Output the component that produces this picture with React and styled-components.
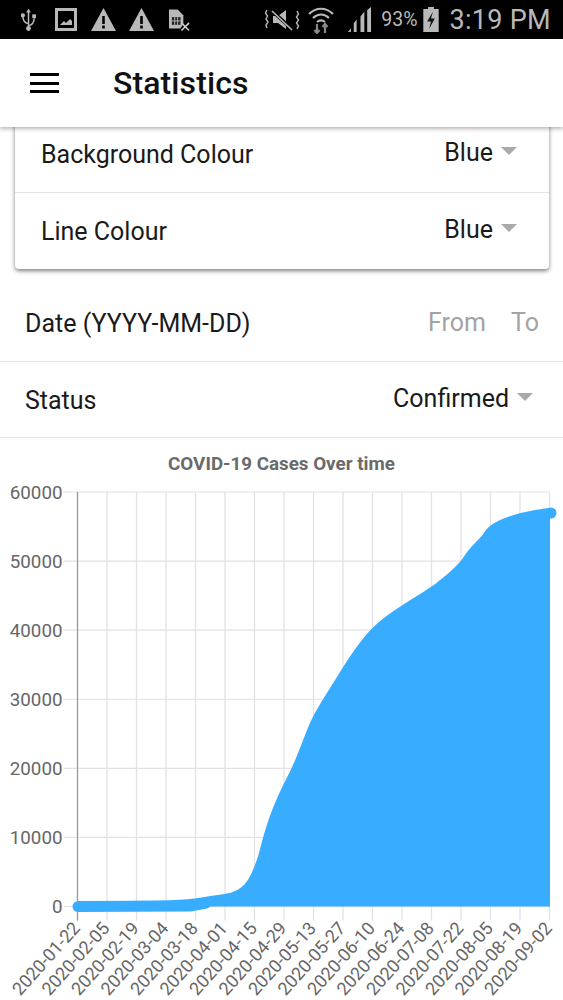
import styled, { createGlobalStyle } from "styled-components"

const GlobalStyle = createGlobalStyle`
  html, body {
    margin: 0;
    height: 1000px;
    overflow: hidden;
    background: #fff;
    font-family: Roboto, "Liberation Sans", sans-serif;
  }
`

const Page = styled.div`
  width: 563px;
  height: 1000px;
  display: flex;
  flex-direction: column;
  overflow: hidden;
`

const StatusBar = styled.div`
  height: 39px;
  flex: none;
  background: #000;
  display: flex;
  align-items: center;
  justify-content: space-between;
  padding: 0 12px 0 21px;
  color: #b9b9b9;
  position: relative;
  z-index: 3;
`

const StatusGroup = styled.div`
  display: flex;
  align-items: center;
`

const Battery = styled.span`
  font-size: 19.5px;
  margin-left: 9px;
  margin-right: 5px;
`

const Clock = styled.span`
  font-size: 27px;
  margin-left: 11px;
  letter-spacing: 0.3px;
`

const AppBar = styled.header`
  height: 88px;
  flex: none;
  background: #fff;
  display: flex;
  align-items: center;
  padding-left: 30px;
  box-shadow: 0 2px 4px rgba(0, 0, 0, 0.28);
  position: relative;
  z-index: 2;
`

const Burger = styled.div`
  width: 29px;
  height: 20px;
  margin-right: 54px;
  border-top: 3px solid #000;
  border-bottom: 3px solid #000;
  box-sizing: border-box;
  position: relative;
  &::after {
    content: "";
    position: absolute;
    left: 0;
    right: 0;
    top: 5.5px;
    height: 3px;
    background: #000;
  }
`

const Title = styled.h1`
  margin: 0;
  font-size: 32px;
  font-weight: 500;
  letter-spacing: 0.1px;
  color: #111;
`

const Card = styled.section`
  margin: -11px 14px 0 15px;
  background: #fff;
  border-radius: 0 0 4px 4px;
  box-shadow: 0 2px 4px rgba(0, 0, 0, 0.5);
`

const Row = styled.div`
  height: ${(p) => (p.$low ? "74px" : "76px")};
  display: flex;
  align-items: center;
  justify-content: space-between;
  padding: ${(p) => (p.$inset ? "0 32px 0 26px" : "0 30px 0 25px")};
  padding-top: ${(p) => (p.$low ? "2px" : "0")};
  border-bottom: ${(p) => (p.$plain ? "none" : "1.5px solid #e4e4e4")};
  margin-top: ${(p) => (p.$gap ? "16px" : "0")};
`

const Label = styled.span`
  font-size: 25px;
  color: #1a1a1a;
  margin-top: 1px;
`

const Value = styled.div`
  display: flex;
  align-items: center;
  font-size: 25px;
  color: #1a1a1a;
  margin-bottom: ${(p) => (p.$flush ? "1px" : "4px")};
  margin-right: ${(p) => (p.$flush ? "-6px" : "0")};
`

const Arrow = styled.i`
  width: 0;
  height: 0;
  margin-left: 8px;
  margin-bottom: 2px;
  border-left: 8px solid transparent;
  border-right: 8px solid transparent;
  border-top: 8px solid #aaa;
`

const Hint = styled.span`
  font-size: 25px;
  color: #a3a3a3;
  margin-left: 25px;
`

const ChartTitle = styled.div`
  text-align: center;
  font-size: 18.8px;
  font-weight: 700;
  color: #6a6a6a;
  margin-top: 16px;
  height: 21px;
  line-height: 21px;
`

const ChartBox = styled.svg`
  display: block;
  flex: none;
  width: 563px;
  height: 525px;
`

const Icon = styled.svg`
  display: block;
  flex: none;
  margin-right: ${(p) => p.$gap || 0}px;
`

const dates = [
  "2020-01-22", "2020-02-05", "2020-02-19", "2020-03-04", "2020-03-18", "2020-04-01",
  "2020-04-15", "2020-04-29", "2020-05-13", "2020-05-27", "2020-06-10", "2020-06-24",
  "2020-07-08", "2020-07-22", "2020-08-05", "2020-08-19", "2020-09-02",
]

// chart box starts at y=475 on the page
const originY = 475
const top = 17
const bottom = 431.5
const left = 77.5
const right = 549.5
const stepX = (right - left) / 16
const stepY = (bottom - top) / 6

// top edge of the blue area, traced in page coordinates
const edge = [
  [78, 901], [150, 901], [190, 899.5], [210, 896], [233, 893], [245, 885], [252, 873], [258, 857],
  [260, 849], [265, 830], [273, 807], [283, 785], [292, 768], [302, 743], [312, 717], [330, 688],
  [355, 648], [377, 622], [410, 600], [435, 585], [460, 563], [468, 550], [483, 535], [486, 529],
  [498, 520], [523, 512], [547, 508], [550, 508],
].map((c) => [c[0], c[1] - originY])

// rounds the corners of the traced edge
const edgePath = edge.reduce((d, c, i) => {
  if (i === 0) return `M${c[0]} ${c[1]}`
  const next = edge[i + 1] || c
  return `${d} Q${c[0]} ${c[1]} ${(c[0] + next[0]) / 2} ${(c[1] + next[1]) / 2}`
}, "")
const fillPath = `${edgePath} L550 ${bottom} L78 ${bottom} Z`

const Chart = () => (
  <ChartBox viewBox="0 0 563 525">
    {[0, 1, 2, 3, 4, 5, 6].map((i) => (
      <g key={i}>
        <line x1={left - 14} x2={right} y1={top + i * stepY} y2={top + i * stepY} stroke="#e4e0e6" strokeWidth="1.2" />
        <text x={left - 15} y={top + i * stepY + 6.5} textAnchor="end" fontSize="18.8" fill="#666" fontFamily="Roboto">
          {(6 - i) * 10000}
        </text>
      </g>
    ))}
    {dates.map((d, i) => {
      const x = left + i * stepX
      return (
        <g key={d}>
          <line x1={x} x2={x} y1={top} y2={bottom + 14} stroke={i ? "#e4e0e6" : "#999"} strokeWidth="1.3" />
          <text
            x={x + 3.5}
            y={bottom + 22.5}
            textAnchor="end"
            fontSize="18"
            fill="#666"
            fontFamily="Roboto"
            transform={`rotate(-48 ${x + 3.5} ${bottom + 22.5})`}
          >
            {d}
          </text>
        </g>
      )
    })}
    <path d={fillPath} fill="#38adff" />
    <path d={`M78 ${bottom} L190 431 L206 428`} fill="none" stroke="#38adff" strokeWidth="11" strokeLinecap="round" strokeLinejoin="round" />
    <circle cx="551" cy="38" r="5.5" fill="#38adff" />
  </ChartBox>
)

const UsbIcon = () => (
  <Icon $gap={19} width="15" height="24" viewBox="0 0 16 24" fill="none" stroke="#b9b9b9" strokeWidth="1.6">
    <path d="M8 1v21M8 16C3 15 2 12 2 8M8 18c5-1 6-4 6-8" />
    <circle cx="8" cy="21" r="1.8" fill="#b9b9b9" />
    <circle cx="2" cy="7" r="1.5" fill="#b9b9b9" />
    <path d="M12 6h4v4h-4z" fill="#b9b9b9" stroke="none" />
    <path d="M8 0l2.5 4h-5z" fill="#b9b9b9" stroke="none" />
  </Icon>
)

const PictureIcon = () => (
  <Icon $gap={14} width="22" height="23" viewBox="0 0 22 23">
    <path fillRule="evenodd" d="M0 0h22v23H0zM3 3v17h16V3z" fill="#b9b9b9" />
    <path d="M5 17l4-4 2 2 4-4 2 2v4z" fill="#b9b9b9" />
  </Icon>
)

const WarnIcon = ({ gap }) => (
  <Icon $gap={gap} width="25" height="23" viewBox="0 0 25 23">
    <path fillRule="evenodd" d="M12.5 0L25 23H0zM11.2 8v8h2.6V8zM11.2 17.5v3h2.6v-3z" fill="#b9b9b9" />
  </Icon>
)

const SimIcon = () => (
  <Icon width="22" height="24" viewBox="0 0 23 24">
    <path d="M0 1h9l6 6v9l-3 5H0z" fill="#b9b9b9" />
    <path d="M3 9h9v8H3z" fill="#222" />
    <path d="M6 9v8M9 9v8M3 13h9" stroke="#b9b9b9" strokeWidth="1" />
    <path d="M13 15l8 8M21 15l-8 8" stroke="#d0d0d0" strokeWidth="1.6" />
  </Icon>
)

const MuteIcon = () => (
  <Icon $gap={8} width="36" height="24" viewBox="0 0 36 24" fill="none" stroke="#b9b9b9" strokeWidth="1.4">
    <path d="M3 2l-1.5 3L3.5 8 2 11l2 3-2 3 1 3M33 3l1.5 3-2 3 2 3-2 3 2 3-1.500 3" />
    <path d="M9 8h5l8-6v19l-8-6H9z" fill="#b9b9b9" stroke="none" />
    <path d="M7 2l22 20" stroke="#000" strokeWidth="3.500" />
    <path d="M8 3l20 19" strokeWidth="1.6" />
  </Icon>
)

const WifiIcon = () => (
  <Icon $gap={14} width="26" height="28" viewBox="0 0 26 28" fill="none" stroke="#b9b9b9" strokeWidth="2.2">
    <path d="M1 8c7-7 17-7 24 0M5 12c5-4.500 11-4.500 16 0M9 16c2.500-2 5.500-2 8 0" />
    <path d="M9 18v9M6.500 24l2.500 3 2.500-3M17 27v-9M14.500 21l2.500-3 2.500 3" stroke="#888" />
  </Icon>
)

const SignalIcon = () => (
  <Icon width="24" height="25" viewBox="0 0 25 26">
    <path d="M0 26l3-4v4zM6 26v-9l3-4v13zM13 26V10l4-5v21zM20 26V3l4-3v26z" fill="#b9b9b9" />
  </Icon>
)

const BatteryIcon = () => (
  <Icon width="16" height="25" viewBox="0 0 16 26">
    <path d="M5 0h6v2h5v24H0V2h5z" fill="#b9b9b9" />
    <path d="M10 5L4 15h4l-2 8 6-11H8z" fill="#111" />
  </Icon>
)

const App = () => {
  return (
    <Page>
      <GlobalStyle />
      <StatusBar>
        <StatusGroup>
          <UsbIcon />
          <PictureIcon />
          <WarnIcon gap={13} />
          <WarnIcon gap={15} />
          <SimIcon />
        </StatusGroup>
        <StatusGroup>
          <MuteIcon />
          <WifiIcon />
          <SignalIcon />
          <Battery>93%</Battery>
          <BatteryIcon />
          <Clock>3:19 PM</Clock>
        </StatusGroup>
      </StatusBar>
      <AppBar>
        <Burger />
        <Title>Statistics</Title>
      </AppBar>
      <Card>
        <Row $inset>
          <Label>Background Colour</Label>
          <Value>Blue<Arrow /></Value>
        </Row>
        <Row $inset $plain>
          <Label>Line Colour</Label>
          <Value>Blue<Arrow /></Value>
        </Row>
      </Card>
      <Row $gap>
        <Label>Date (YYYY-MM-DD)</Label>
        <Value $flush>
          <Hint>From</Hint>
          <Hint>To</Hint>
        </Value>
      </Row>
      <Row $low>
        <Label>Status</Label>
        <Value>Confirmed<Arrow /></Value>
      </Row>
      <ChartTitle>COVID-19 Cases Over time</ChartTitle>
      <Chart />
    </Page>
  )
}

export default App
